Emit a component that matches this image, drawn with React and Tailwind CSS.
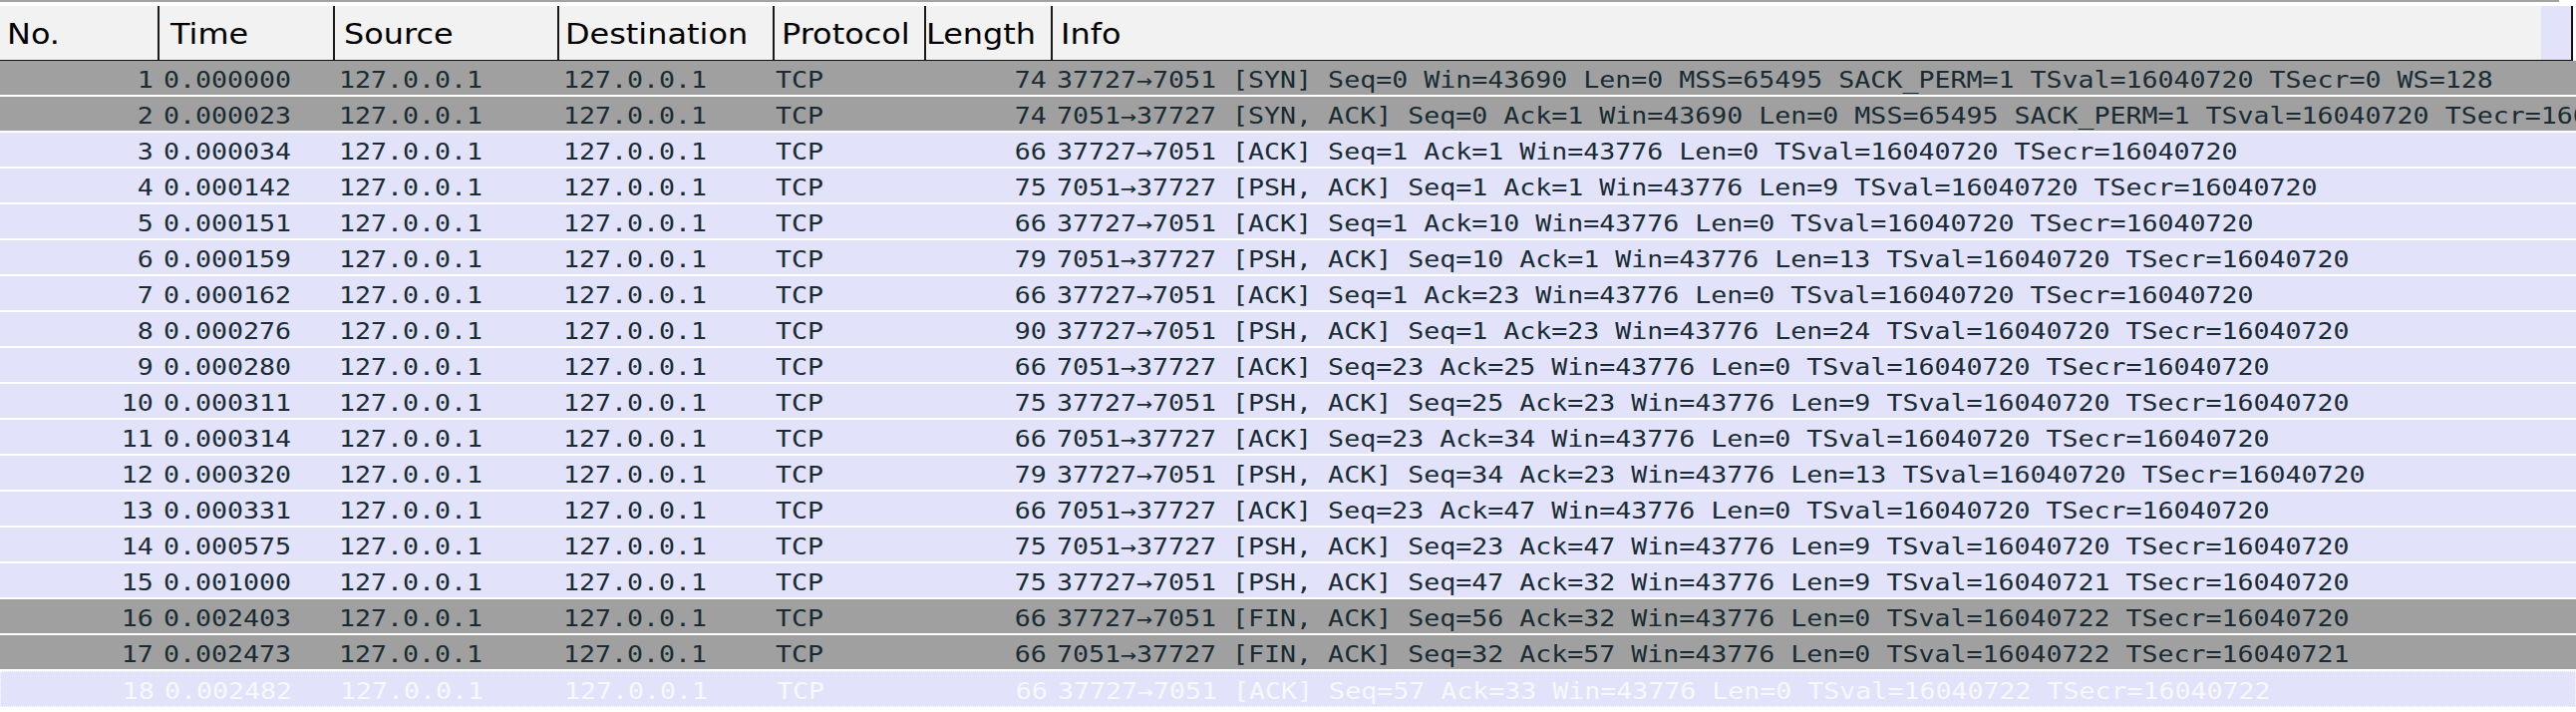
const GRAY = 'gray'
const TCP = 'tcp'
const SEL = 'sel'

const packets = [
  [1, '0.000000', 74, '37727→7051 [SYN] Seq=0 Win=43690 Len=0 MSS=65495 SACK_PERM=1 TSval=16040720 TSecr=0 WS=128', GRAY],
  [2, '0.000023', 74, '7051→37727 [SYN, ACK] Seq=0 Ack=1 Win=43690 Len=0 MSS=65495 SACK_PERM=1 TSval=16040720 TSecr=16040720 WS=128', GRAY],
  [3, '0.000034', 66, '37727→7051 [ACK] Seq=1 Ack=1 Win=43776 Len=0 TSval=16040720 TSecr=16040720', TCP],
  [4, '0.000142', 75, '7051→37727 [PSH, ACK] Seq=1 Ack=1 Win=43776 Len=9 TSval=16040720 TSecr=16040720', TCP],
  [5, '0.000151', 66, '37727→7051 [ACK] Seq=1 Ack=10 Win=43776 Len=0 TSval=16040720 TSecr=16040720', TCP],
  [6, '0.000159', 79, '7051→37727 [PSH, ACK] Seq=10 Ack=1 Win=43776 Len=13 TSval=16040720 TSecr=16040720', TCP],
  [7, '0.000162', 66, '37727→7051 [ACK] Seq=1 Ack=23 Win=43776 Len=0 TSval=16040720 TSecr=16040720', TCP],
  [8, '0.000276', 90, '37727→7051 [PSH, ACK] Seq=1 Ack=23 Win=43776 Len=24 TSval=16040720 TSecr=16040720', TCP],
  [9, '0.000280', 66, '7051→37727 [ACK] Seq=23 Ack=25 Win=43776 Len=0 TSval=16040720 TSecr=16040720', TCP],
  [10, '0.000311', 75, '37727→7051 [PSH, ACK] Seq=25 Ack=23 Win=43776 Len=9 TSval=16040720 TSecr=16040720', TCP],
  [11, '0.000314', 66, '7051→37727 [ACK] Seq=23 Ack=34 Win=43776 Len=0 TSval=16040720 TSecr=16040720', TCP],
  [12, '0.000320', 79, '37727→7051 [PSH, ACK] Seq=34 Ack=23 Win=43776 Len=13 TSval=16040720 TSecr=16040720', TCP],
  [13, '0.000331', 66, '7051→37727 [ACK] Seq=23 Ack=47 Win=43776 Len=0 TSval=16040720 TSecr=16040720', TCP],
  [14, '0.000575', 75, '7051→37727 [PSH, ACK] Seq=23 Ack=47 Win=43776 Len=9 TSval=16040720 TSecr=16040720', TCP],
  [15, '0.001000', 75, '37727→7051 [PSH, ACK] Seq=47 Ack=32 Win=43776 Len=9 TSval=16040721 TSecr=16040720', TCP],
  [16, '0.002403', 66, '37727→7051 [FIN, ACK] Seq=56 Ack=32 Win=43776 Len=0 TSval=16040722 TSecr=16040720', GRAY],
  [17, '0.002473', 66, '7051→37727 [FIN, ACK] Seq=32 Ack=57 Win=43776 Len=0 TSval=16040722 TSecr=16040721', GRAY],
  [18, '0.002482', 66, '37727→7051 [ACK] Seq=57 Ack=33 Win=43776 Len=0 TSval=16040722 TSecr=16040722', SEL],
]

const ROW_STYLE = {
  gray: 'h-[34px] mb-[2px] bg-[#a0a0a0] text-[#1a2c33]',
  tcp: 'h-[34px] mb-[2px] bg-[#e2e2fb] text-[#1a2c33]',
  sel: 'h-[36px] bg-[#e2e2fb] text-[#f8f8ff] border border-dotted border-[#fafaff]',
}

// monospaced cell text, stretched a bit wider like the capture
function Mono({ children, right }) {
  return (
    <span
      className={
        right
          ? 'inline-block origin-right scale-x-[1.156] whitespace-pre'
          : 'inline-block origin-left scale-x-[1.156] whitespace-pre'
      }
    >
      {children}
    </span>
  )
}

function HeadLabel({ children }) {
  return (
    <span className="inline-block origin-left scale-x-[1.14] whitespace-pre">{children}</span>
  )
}

function Header() {
  return (
    <div className="flex h-[55px] w-[2581px] border-b border-r-2 border-[#111111] bg-[#f2f2f2] font-['DejaVu_Sans',sans-serif] text-[28px] leading-[34px] text-black">
      <div className="w-[160px] shrink-0 border-r-2 border-[#1a1a1a] pl-[7px] pt-[12px]">
        <HeadLabel>No.</HeadLabel>
      </div>
      <div className="w-[176px] shrink-0 border-r-2 border-[#1a1a1a] pl-[11px] pt-[12px]">
        <HeadLabel>Time</HeadLabel>
      </div>
      <div className="w-[225px] shrink-0 border-r-2 border-[#1a1a1a] pl-[9px] pt-[12px]">
        <HeadLabel>Source</HeadLabel>
      </div>
      <div className="w-[216px] shrink-0 border-r-2 border-[#1a1a1a] pl-[6px] pt-[12px]">
        <HeadLabel>Destination</HeadLabel>
      </div>
      <div className="w-[152px] shrink-0 border-r-2 border-[#1a1a1a] pl-[7px] pt-[12px]">
        <HeadLabel>Protocol</HeadLabel>
      </div>
      <div className="w-[127px] shrink-0 overflow-hidden border-r-2 border-[#1a1a1a] pl-0 pt-[12px]">
        <HeadLabel>Length</HeadLabel>
      </div>
      <div className="flex-1 pl-[8px] pt-[12px]">
        <HeadLabel>Info</HeadLabel>
      </div>
      <div className="w-[30px] shrink-0 bg-[#e2e2fb]" />
    </div>
  )
}

function Row({ p }) {
  const [no, time, len, info, kind] = p
  return (
    <div className={`flex w-full overflow-hidden ${ROW_STYLE[kind]}`}>
      <div className="flex w-[160px] shrink-0 justify-end pr-[6px] pt-[5px] leading-[28px]">
        <Mono right>{no}</Mono>
      </div>
      <div className="w-[176px] shrink-0 pl-[4px] pt-[5px] leading-[28px]">
        <Mono>{time}</Mono>
      </div>
      <div className="w-[225px] shrink-0 pl-[4px] pt-[5px] leading-[28px]">
        <Mono>127.0.0.1</Mono>
      </div>
      <div className="w-[216px] shrink-0 pl-[4px] pt-[5px] leading-[28px]">
        <Mono>127.0.0.1</Mono>
      </div>
      <div className="w-[152px] shrink-0 pl-[1px] pt-[5px] leading-[28px]">
        <Mono>TCP</Mono>
      </div>
      <div className="flex w-[127px] shrink-0 justify-end pr-[6px] pt-[5px] leading-[28px]">
        <Mono right>{len}</Mono>
      </div>
      <div className="min-w-0 flex-1 pl-[4px] pt-[5px] leading-[28px]">
        <Mono>{info}</Mono>
      </div>
    </div>
  )
}

export default function App() {
  return (
    <div className="h-[714px] w-[2584px] overflow-hidden bg-white">
      <div className="h-[2px] w-[2567px] bg-[#a3a3a3]" />
      <div className="h-[4px]" />
      <Header />
      <div className="font-['DejaVu_Sans_Mono',monospace] text-[23px]">
        {packets.map((p) => (
          <Row key={p[0]} p={p} />
        ))}
      </div>
    </div>
  )
}
